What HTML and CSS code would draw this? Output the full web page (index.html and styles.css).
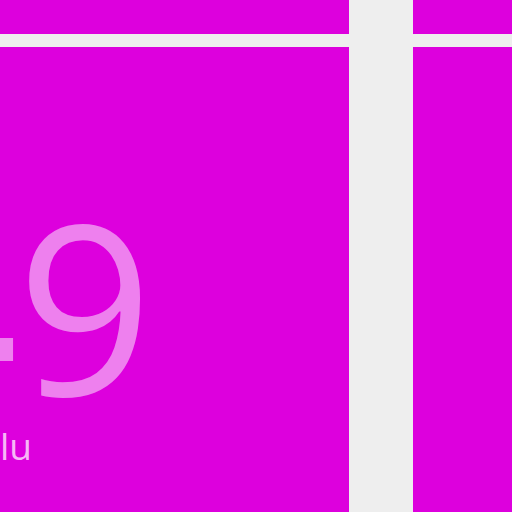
FILE: index.html
```html
<!DOCTYPE html>
<html>
<head>
<meta charset="utf-8">
<link rel="stylesheet" href="styles.css">
</head>
<body>
<div class="board">
  <div class="col col-main">
    <div class="tile tile-top"></div>
    <div class="tile tile-big">
      <div class="value"><span class="sign">-</span>9</div>
      <div class="label">lu</div>
    </div>
  </div>
  <div class="col col-side">
    <div class="tile tile-top"></div>
    <div class="tile tile-big"></div>
  </div>
</div>
</body>
</html>
```
FILE: styles.css
```css
html, body {
  margin: 0;
  padding: 0;
  width: 512px;
  height: 512px;
  overflow: hidden;
  background: #eeeeee;
}
.board {
  display: flex;
  gap: 64px;
  width: 512px;
  height: 512px;
}
.col {
  display: flex;
  flex-direction: column;
  gap: 13px;
}
.col-main { width: 349px; flex: none; }
.col-side { flex: 1; }
.tile { background: #dd00dd; }
.tile-top { height: 34px; flex: none; }
.tile-big {
  flex: 1;
  display: flex;
  flex-direction: column;
  overflow: hidden;
  font-family: "Open Sans", "Noto Sans", sans-serif;
}
.value {
  margin-top: 139px;
  margin-left: -55px;
  font-size: 237px;
  line-height: 237px;
  height: 237px;
  color: #ee80ee;
  white-space: nowrap;
  overflow: hidden;
}
.sign {
  margin-right: -4px;
  vertical-align: -17px;
  font-weight: 600;
}
.label {
  margin-top: 3px;
  font-size: 37px;
  line-height: 40px;
  color: #f6b8f6;
}
```
